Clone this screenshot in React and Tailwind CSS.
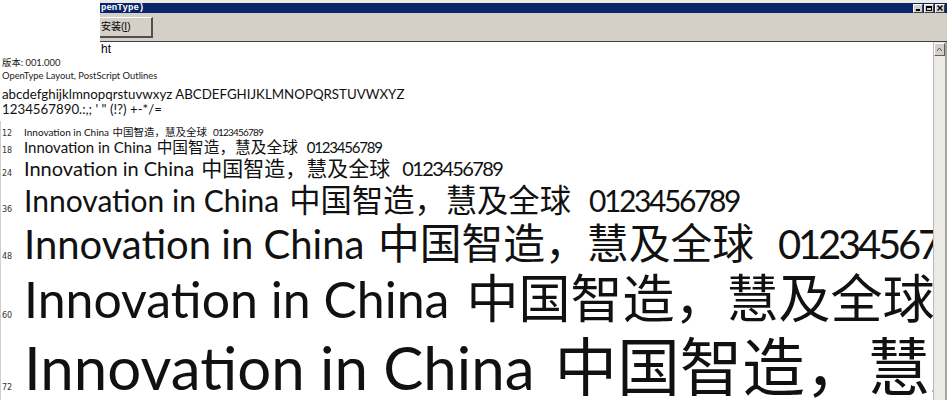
import React from "react";

function Row({ h, label, children }) {
  return (
    <div className={`flex items-baseline whitespace-nowrap ${h}`}>
      <span className="w-[23px] shrink-0 pl-[1px] text-[8px] leading-none text-[#333] font-['DejaVu_Sans',sans-serif]">
        {label}
      </span>
      {children}
    </div>
  );
}

const LAT = "font-['Lato',sans-serif] leading-none text-[#111]";
const CJK = "font-['Noto_Sans_CJK_SC',sans-serif] leading-none text-[#111]";

function WinBtn({ children }) {
  return (
    <div className="w-[10px] h-[9px] bg-[#d4d0c8] border-t border-l border-white border-r border-b border-r-[#404040] border-b-[#404040] flex items-center justify-center">
      {children}
    </div>
  );
}

export default function App() {
  return (
    <div className="w-[947px] h-[400px] overflow-hidden bg-white flex flex-col font-['Liberation_Sans',sans-serif] text-black">
      {/* window chrome */}
      <div className="flex h-[42px] shrink-0">
        <div className="w-[100px] shrink-0 bg-white" />
        <div className="flex-1 flex flex-col">
          <div className="h-[3px] bg-[#ecebe6]" />
          <div className="h-[10px] bg-[#0a246a] flex items-center justify-between">
            <span className="text-white text-[9px] font-bold font-['Liberation_Mono',monospace] leading-none pl-[1px]">
              penType)
            </span>
            <div className="flex gap-[1px] pr-[2px]">
              <WinBtn>
                <div className="w-[4px] h-[1.5px] bg-black mt-[4px]" />
              </WinBtn>
              <WinBtn>
                <div className="w-[6px] h-[5px] border border-black border-t-2" />
              </WinBtn>
              <WinBtn>
                <svg width="6" height="6" viewBox="0 0 6 6">
                  <path d="M0.5 0.5 L5.5 5.5 M5.5 0.5 L0.5 5.5" stroke="#000" strokeWidth="1.4" />
                </svg>
              </WinBtn>
            </div>
          </div>
          <div className="flex-1 bg-[#d4d0c8] border-b border-[#404040] flex items-start pt-[4px]">
            <div className="w-[53px] h-[21px] border-t border-t-white border-r-2 border-b-2 border-r-[#505050] border-b-[#505050] flex items-center text-[10px] leading-none pl-[1px] font-['Liberation_Sans','Noto_Sans_CJK_SC',sans-serif]">
              安装(<span className="underline">I</span>)
            </div>
          </div>
        </div>
      </div>

      {/* body */}
      <div className="flex-1 flex min-h-0">
        <div className="flex-1 min-w-0 overflow-hidden flex flex-col">
          <div className="h-[14px] pl-[101px] text-[12px] leading-[14px]">ht</div>
          <div className="pl-[2px] text-[9.4px] leading-[13px] font-['Lato','Noto_Sans_CJK_SC',sans-serif] text-[#222]">
            版本: 001.000
          </div>
          <div className="pl-[2px] text-[9.4px] leading-[13px] font-['Lato',sans-serif] text-[#222]">
            OpenType Layout, PostScript Outlines
          </div>
          <div className="h-px bg-[#8a8a8a] mt-[1px]" />
          <div className="pl-[2px] mt-[4px] text-[13.3px] leading-[15px] font-['Lato',sans-serif] text-[#111] whitespace-nowrap">
            abcdefghijklmnopqrstuvwxyz ABCDEFGHIJKLMNOPQRSTUVWXYZ
          </div>
          <div className="pl-[2px] text-[13.3px] leading-[15px] font-['Lato',sans-serif] text-[#111] whitespace-nowrap">
            1234567890.:,; ' " (!?) +-*/=
          </div>
          <div className="h-px bg-[#8a8a8a] mt-[4px]" />

          <div className="flex-1 border-l border-[#cfcfcf] pt-[6px]">
            <Row h="h-[12px]" label="12">
              <span className={`${LAT} text-[10px]`}>Innovation in China</span>
              <span className={`${CJK} text-[10.5px] ml-[3.5px]`}>中国智造，慧及全球</span>
              <span className={`${LAT} text-[10px] ml-[6px] tracking-[-0.08em]`}>0123456789</span>
            </Row>
            <Row h="h-[18px]" label="18">
              <span className={`${LAT} text-[15px]`}>Innovation in China</span>
              <span className={`${CJK} text-[15.7px] ml-[5px]`}>中国智造，慧及全球</span>
              <span className={`${LAT} text-[15px] ml-[9px] tracking-[-0.08em]`}>0123456789</span>
            </Row>
            <Row h="h-[26px]" label="24">
              <span className={`${LAT} text-[20px]`}>Innovation in China</span>
              <span className={`${CJK} text-[21px] ml-[7px]`}>中国智造，慧及全球</span>
              <span className={`${LAT} text-[20px] ml-[12px] tracking-[-0.08em]`}>0123456789</span>
            </Row>
            <Row h="h-[38px]" label="36">
              <span className={`${LAT} text-[30px]`}>Innovation in China</span>
              <span className={`${CJK} text-[31.3px] ml-[10px]`}>中国智造，慧及全球</span>
              <span className={`${LAT} text-[30px] ml-[18px] tracking-[-0.08em]`}>0123456789</span>
            </Row>
            <Row h="h-[49px]" label="48">
              <span className={`${LAT} text-[40px]`}>Innovation in China</span>
              <span className={`${CJK} text-[41.8px] ml-[13.5px]`}>中国智造，慧及全球</span>
              <span className={`${LAT} text-[40px] ml-[24px] tracking-[-0.08em]`}>0123456789</span>
            </Row>
            <Row h="h-[62px]" label="60">
              <span className={`${LAT} text-[50px]`}>Innovation in China</span>
              <span className={`${CJK} text-[52px] ml-[17px]`}>中国智造，慧及全球</span>
              <span className={`${LAT} text-[50px] ml-[30px] tracking-[-0.08em]`}>0123456789</span>
            </Row>
            <Row h="h-[72px]" label="72">
              <span className={`${LAT} text-[60px]`}>Innovation in China</span>
              <span className={`${CJK} text-[62.6px] ml-[20px]`}>中国智造，慧及全球</span>
              <span className={`${LAT} text-[60px] ml-[36px] tracking-[-0.08em]`}>0123456789</span>
            </Row>
          </div>
        </div>

        {/* scrollbar */}
        <div className="w-[12px] shrink-0 bg-[#eceae4] border-l border-[#bdbab3] flex flex-col">
          <div className="h-[13px] mt-[1px] bg-[#d4d0c8] border-t border-l border-white border-r border-b border-r-[#606060] border-b-[#606060] flex items-center justify-center">
            <svg width="5" height="3" viewBox="0 0 5 3">
              <path d="M0 3 L2.5 0 L5 3" fill="none" stroke="#555" strokeWidth="1" />
            </svg>
          </div>
        </div>
        <div className="w-[2px] shrink-0 bg-[#a8a59e]" />
      </div>
    </div>
  );
}
